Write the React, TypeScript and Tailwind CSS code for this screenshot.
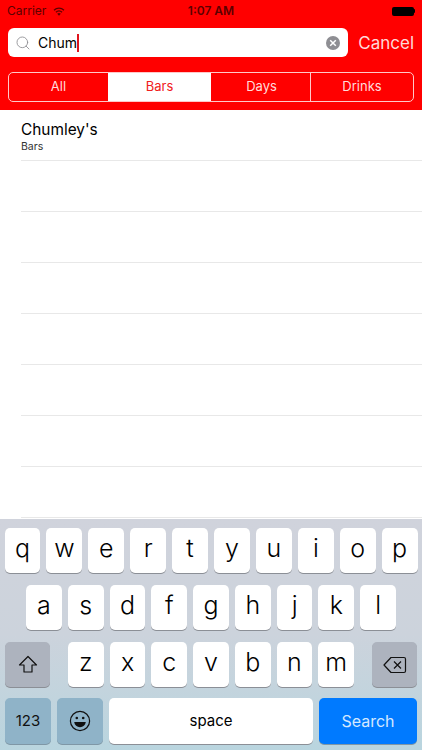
import React from 'react';
import { Search } from 'lucide-react';

const ROW_ONE = ['q', 'w', 'e', 'r', 't', 'y', 'u', 'i', 'o', 'p'];
const ROW_TWO = ['a', 's', 'd', 'f', 'g', 'h', 'j', 'k', 'l'];
const ROW_THREE = ['z', 'x', 'c', 'v', 'b', 'n', 'm'];

const LetterKey = ({ label }: { label: string }) => (
  <div className="flex-1 h-[45px] bg-white rounded-[5px] shadow-[0_1px_0_#8b8f96] flex items-center justify-center text-[25px] font-light text-black pb-[3px]">
    {label}
  </div>
);

const StatusBar = () => (
  <div className="h-[21px] pt-[1px] flex items-center px-[7px] relative text-[12px] text-[#5c0000]">
    <span>Carrier</span>
    <svg width="12" height="9" viewBox="0 0 12 9" className="ml-[7px]">
      <path d="M6 8.8 L4.2 6.7 A2.8 2.8 0 0 1 7.8 6.7 Z" fill="#5c0000" />
      <path d="M2.9 5.2 A4.7 4.7 0 0 1 9.1 5.2" fill="none" stroke="#5c0000" strokeWidth="1.3" />
      <path d="M1 3.2 A7.3 7.3 0 0 1 11 3.2" fill="none" stroke="#5c0000" strokeWidth="1.3" />
    </svg>
    <span className="absolute left-0 right-0 text-center font-semibold">1:07 AM</span>
    <div className="ml-auto flex items-center">
      <div className="w-[22px] h-[9px] bg-black rounded-[2px]" />
      <div className="w-[1.5px] h-[4px] bg-black rounded-r-sm" />
    </div>
  </div>
);

const SearchRow = () => (
  <div className="flex items-center px-[8px] mt-[7px]">
    <div className="w-[340px] h-[29px] bg-white rounded-[6px] flex items-center pl-[7px] pr-[8px]">
      <Search size={16} strokeWidth={1.3} className="text-[#8e8e93]" />
      <span className="ml-[7px] text-[14px] text-black">Chum</span>
      <div className="w-[2px] h-[18px] bg-[#e0141c]" />
      <div className="ml-auto w-[14px] h-[14px] rounded-full bg-[#8e8e93] flex items-center justify-center">
        <svg width="8" height="8" viewBox="0 0 8 8">
          <path d="M1.2 1.2 L6.8 6.8 M6.8 1.2 L1.2 6.8" stroke="#fff" strokeWidth="1.5" />
        </svg>
      </div>
    </div>
    <span className="ml-auto pt-[2px] text-[17px] text-[#ffd9d9]">Cancel</span>
  </div>
);

const SegmentBar = () => (
  <div className="mx-[8px] mt-[15px] h-[30px] border border-[#ffc9c9] rounded-[5px] flex overflow-hidden text-[13px]">
    <div className="w-[99px] flex items-center justify-center text-[#ffdcdc]">All</div>
    <div className="w-[103px] flex items-center justify-center bg-white text-[#f02020]">Bars</div>
    <div className="w-[100px] flex items-center justify-center pl-[2px] text-[#ffdcdc] border-r border-[#ffc9c9]">Days</div>
    <div className="flex-1 flex items-center justify-center text-[#ffdcdc]">Drinks</div>
  </div>
);

const App = () => {
  return (
    <div className="w-[422px] h-[750px] flex flex-col overflow-hidden bg-white font-['Inter',sans-serif]">
      <div className="h-[110px] bg-[#ff0000] shrink-0">
        <StatusBar />
        <SearchRow />
        <SegmentBar />
      </div>

      {/* Results */}
      <div className="flex-1 overflow-hidden">
        <div className="h-[51px] ml-[21px] border-b border-[#e8e8e8] pt-[10px] text-black">
          <div className="text-[15.4px] leading-[20px]">Chumley's</div>
          <div className="text-[10.5px] leading-[11px] mt-[1px] text-[#333]">Bars</div>
        </div>
        {[0, 1, 2, 3, 4, 5, 6].map((i) => (
          <div key={i} className="h-[51px] ml-[21px] border-b border-[#e8e8e8]" />
        ))}
      </div>

      {/* Keyboard */}
      <div className="h-[231px] shrink-0 bg-gradient-to-b from-[#d0d3dc] via-[#ccd3dc] to-[#b9d5df] pt-[9px]">
        <div className="flex gap-[6px] px-[4.5px]">
          {ROW_ONE.map((k) => (
            <LetterKey key={k} label={k} />
          ))}
        </div>
        <div className="flex gap-[6px] px-[26px] mt-[12px]">
          {ROW_TWO.map((k) => (
            <LetterKey key={k} label={k} />
          ))}
        </div>
        <div className="flex px-[5px] mt-[12px]">
          <div className="w-[45px] h-[45px] rounded-[5px] bg-[#adb3be] shadow-[0_1px_0_#8b8f96] flex items-center justify-center">
            <svg width="20" height="19" viewBox="0 0 20 19" fill="none" stroke="#111" strokeWidth="1.2" strokeLinejoin="round">
              <path d="M10 1.5 L18.5 10 H14 V17 H6 V10 H1.5 Z" />
            </svg>
          </div>
          <div className="flex-1 flex gap-[6px] mx-[18px]">
            {ROW_THREE.map((k) => (
              <LetterKey key={k} label={k} />
            ))}
          </div>
          <div className="w-[45px] h-[45px] rounded-[5px] bg-[#adb3be] shadow-[0_1px_0_#8b8f96] flex items-center justify-center">
            <svg width="24" height="18" viewBox="0 0 24 18" fill="none" stroke="#111" strokeWidth="1.2" strokeLinejoin="round">
              <path d="M8 1.5 H21 A1.5 1.5 0 0 1 22.5 3 V15 A1.5 1.5 0 0 1 21 16.5 H8 L1 9 Z" />
              <path d="M11 5.5 L18 12.5 M18 5.5 L11 12.5" />
            </svg>
          </div>
        </div>
        <div className="flex gap-[6px] px-[5px] mt-[11px] h-[46px]">
          <div className="w-[46px] rounded-[5px] bg-[#8fb3c8] shadow-[0_1px_0_#7f97a6] flex items-center justify-center text-[15px] text-[#111]">
            123
          </div>
          <div className="w-[46px] rounded-[5px] bg-[#8fb3c8] shadow-[0_1px_0_#7f97a6] flex items-center justify-center">
            <svg width="22" height="22" viewBox="0 0 22 22" fill="none" stroke="#111" strokeWidth="1.2">
              <circle cx="11" cy="11" r="9.6" />
              <circle cx="7.8" cy="8" r="1.3" fill="#111" stroke="none" />
              <circle cx="14.2" cy="8" r="1.3" fill="#111" stroke="none" />
              <path d="M5.2 12 H16.8 C16.4 15.4 14 17.2 11 17.2 C8 17.2 5.6 15.4 5.2 12 Z" fill="#111" stroke="none" />
            </svg>
          </div>
          <div className="flex-1 rounded-[5px] bg-white shadow-[0_1px_0_#8b8f96] flex items-center justify-center text-[15px] text-black">
            space
          </div>
          <div className="w-[98px] rounded-[5px] bg-[#007aff] shadow-[0_1px_0_#7f97a6] flex items-center justify-center text-[16px] text-[#d4e8ff]">
            Search
          </div>
        </div>
      </div>
    </div>
  );
};

export default App;
